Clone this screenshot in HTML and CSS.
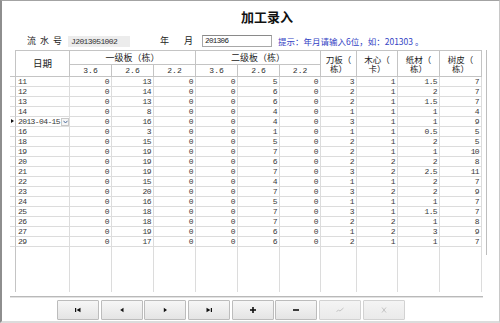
FILE: index.html
```html
<!DOCTYPE html>
<html>
<head>
<meta charset="utf-8">
<title>加工录入</title>
<link rel="stylesheet" href="styles.css">
</head>
<body>
<div class="window">
  <h1 class="title">加工录入</h1>
  <div class="info">
    <span class="spread lsh"><span>流</span><span>水</span><span>号</span></span>
    <span class="serial">J2013051002</span>
    <span class="spread ym"><span>年</span><span>月</span></span>
    <span class="input">201306</span>
    <span class="tip">提示：年月请输入6位，如：201303 。</span>
  </div>
  <div class="gridwrap">
    <table class="grid">
      <colgroup>
        <col class="c-rh"><col class="c-date">
        <col class="c42"><col class="c42"><col class="c42">
        <col class="c42"><col class="c42"><col class="c41">
        <col class="c36"><col class="c41"><col class="c42"><col class="c42">
      </colgroup>
      <thead>
        <tr class="h1">
          <th class="rh" rowspan="2"></th>
          <th class="date" rowspan="2">日期</th>
          <th colspan="3">一级板（栋）</th>
          <th colspan="3">二级板（栋）</th>
          <th class="two" rowspan="2">刀板（<br>栋）</th>
          <th class="two" rowspan="2">木心（<br>卡）</th>
          <th class="two" rowspan="2">纸材（<br>栋）</th>
          <th class="two" rowspan="2">树皮（<br>栋）</th>
        </tr>
        <tr class="h2">
          <th class="num">3.6</th><th class="num">2.6</th><th class="num">2.2</th>
          <th class="num">3.6</th><th class="num">2.6</th><th class="num">2.2</th>
        </tr>
      </thead>
      <tbody>
        <tr><td class="rh"></td><td class="d">11</td><td>0</td><td>13</td><td>0</td><td>0</td><td>5</td><td>0</td><td>3</td><td>1</td><td>1.5</td><td>7</td></tr>
        <tr><td class="rh"></td><td class="d">12</td><td>0</td><td>14</td><td>0</td><td>0</td><td>6</td><td>0</td><td>2</td><td>1</td><td>2</td><td>7</td></tr>
        <tr><td class="rh"></td><td class="d">13</td><td>0</td><td>13</td><td>0</td><td>0</td><td>6</td><td>0</td><td>2</td><td>1</td><td>1.5</td><td>7</td></tr>
        <tr><td class="rh"></td><td class="d">14</td><td>0</td><td>8</td><td>0</td><td>0</td><td>4</td><td>0</td><td>1</td><td>1</td><td>1</td><td>4</td></tr>
        <tr class="cur"><td class="rh"><span class="ind"></span></td><td class="d"><span class="dtext">2013-04-15</span><span class="dd"><svg width="5" height="4" viewBox="0 0 5 4"><polyline points="0.5,0.8 2.5,3 4.5,0.8" fill="none" stroke="#4a6a9a" stroke-width="1"/></svg></span></td><td>0</td><td>16</td><td>0</td><td>0</td><td>4</td><td>0</td><td>3</td><td>1</td><td>1</td><td>9</td></tr>
        <tr><td class="rh"></td><td class="d">16</td><td>0</td><td>3</td><td>0</td><td>0</td><td>1</td><td>0</td><td>1</td><td>1</td><td>0.5</td><td>5</td></tr>
        <tr><td class="rh"></td><td class="d">18</td><td>0</td><td>15</td><td>0</td><td>0</td><td>5</td><td>0</td><td>2</td><td>1</td><td>2</td><td>5</td></tr>
        <tr><td class="rh"></td><td class="d">19</td><td>0</td><td>19</td><td>0</td><td>0</td><td>7</td><td>0</td><td>2</td><td>1</td><td>1</td><td>10</td></tr>
        <tr><td class="rh"></td><td class="d">20</td><td>0</td><td>19</td><td>0</td><td>0</td><td>6</td><td>0</td><td>2</td><td>2</td><td>2</td><td>8</td></tr>
        <tr><td class="rh"></td><td class="d">21</td><td>0</td><td>19</td><td>0</td><td>0</td><td>7</td><td>0</td><td>3</td><td>2</td><td>2.5</td><td>11</td></tr>
        <tr><td class="rh"></td><td class="d">22</td><td>0</td><td>15</td><td>0</td><td>0</td><td>4</td><td>0</td><td>1</td><td>1</td><td>2</td><td>7</td></tr>
        <tr><td class="rh"></td><td class="d">23</td><td>0</td><td>20</td><td>0</td><td>0</td><td>7</td><td>0</td><td>3</td><td>2</td><td>2</td><td>9</td></tr>
        <tr><td class="rh"></td><td class="d">24</td><td>0</td><td>16</td><td>0</td><td>0</td><td>5</td><td>0</td><td>1</td><td>1</td><td>1</td><td>7</td></tr>
        <tr><td class="rh"></td><td class="d">25</td><td>0</td><td>18</td><td>0</td><td>0</td><td>7</td><td>0</td><td>3</td><td>1</td><td>1.5</td><td>7</td></tr>
        <tr><td class="rh"></td><td class="d">26</td><td>0</td><td>18</td><td>0</td><td>0</td><td>7</td><td>0</td><td>2</td><td>2</td><td>1</td><td>8</td></tr>
        <tr><td class="rh"></td><td class="d">27</td><td>0</td><td>19</td><td>0</td><td>0</td><td>6</td><td>0</td><td>1</td><td>2</td><td>3</td><td>9</td></tr>
        <tr><td class="rh"></td><td class="d">29</td><td>0</td><td>17</td><td>0</td><td>0</td><td>6</td><td>0</td><td>2</td><td>1</td><td>1</td><td>7</td></tr>
        <tr class="filler"><td class="rh"></td><td></td><td></td><td></td><td></td><td></td><td></td><td></td><td></td><td></td><td></td><td></td></tr>
      </tbody>
    </table>
    <div class="vline"></div>
  </div>
  <div class="gridbottom"></div>
  <div class="nav">
    <button class="btn"><svg width="10" height="10" viewBox="0 0 10 10"><rect x="2" y="3" width="1.2" height="4" fill="#111"/><polygon points="7.5,2.8 7.5,7.2 3.6,5" fill="#111"/></svg></button>
    <button class="btn"><svg width="10" height="10" viewBox="0 0 10 10"><polygon points="6.5,2.8 6.5,7.2 3.2,5" fill="#111"/></svg></button>
    <button class="btn"><svg width="10" height="10" viewBox="0 0 10 10"><polygon points="3.8,2.8 3.8,7.2 7,5" fill="#111"/></svg></button>
    <button class="btn"><svg width="10" height="10" viewBox="0 0 10 10"><polygon points="2.5,2.8 2.5,7.2 6.4,5" fill="#111"/><rect x="6.8" y="3" width="1.2" height="4" fill="#111"/></svg></button>
    <button class="btn"><svg width="10" height="10" viewBox="0 0 10 10"><rect x="2" y="4.2" width="6" height="1.6" fill="#111"/><rect x="4.2" y="2" width="1.6" height="6" fill="#111"/></svg></button>
    <button class="btn"><svg width="10" height="10" viewBox="0 0 10 10"><rect x="2" y="4.2" width="6" height="1.6" fill="#111"/></svg></button>
    <button class="btn off"><svg width="10" height="10" viewBox="0 0 10 10"><polyline points="1.5,6.5 3.5,5.2 5,6 8.5,3" fill="none" stroke="#c4c4c4" stroke-width="1"/></svg></button>
    <button class="btn off"><svg width="10" height="10" viewBox="0 0 10 10"><path d="M3 2.5 L7 7.5 M7 2.5 L3 7.5" fill="none" stroke="#c4c4c4" stroke-width="1"/></svg></button>
  </div>
</div>
</body>
</html>
```

FILE: styles.css
```css
* { box-sizing: border-box; }
html, body { margin: 0; padding: 0; background: #ffffff; }
body { font-family: "Noto Sans CJK SC", "Noto Sans", sans-serif; color: #222; }

.window {
  width: 500px;
  height: 323px;
  border-top: 1px solid #a3a3a3;
  border-left: 2px solid #8e8e8e;
  border-right: 1px solid #c8c8c8;
  border-bottom: 2px solid #dcdcdc;
  background: #ffffff;
  overflow: hidden;
}

.title {
  margin: 0 0 0 33px;
  padding-top: 8px;
  height: 25px;
  line-height: 16px;
  font-size: 13px;
  font-weight: bold;
  text-align: center;
  color: #111;
}

.info {
  display: flex;
  align-items: center;
  height: 12px;
  margin-top: 9px;
  padding-left: 25px;
  font-size: 9px;
  line-height: 12px;
}
.spread { display: flex; justify-content: space-between; }
.lsh { width: 35px; }
.ym { width: 33px; margin-left: 30px; }
.serial {
  margin-left: 6px;
  width: 62px;
  height: 11px;
  line-height: 11px;
  background: #ececec;
  padding-left: 3px;
  font-family: "Liberation Mono", monospace;
  font-size: 8px;
  letter-spacing: -0.6px;
  color: #333;
}
.input {
  margin-left: 9px;
  width: 70px;
  height: 12px;
  line-height: 10px;
  border: 1px solid #a8a8a8;
  border-top-color: #8a8a8a;
  padding-left: 2px;
  font-family: "Liberation Mono", monospace;
  font-size: 7.5px;
  letter-spacing: -0.6px;
  color: #222;
}
.tip {
  margin-left: 6px;
  color: #3343c4;
  font-size: 8.5px;
}

.gridwrap {
  display: flex;
  align-items: flex-start;
  margin-top: 3px;
  margin-left: 8px;
}
.vline {
  margin-left: 4px;
  width: 1px;
  height: 205px;
  background: #bdbdbd;
}

.grid {
  table-layout: fixed;
  width: 472px;
  border-collapse: separate;
  border-spacing: 0;
}
.c-rh { width: 6px; }
.c-date { width: 54px; }
.c42 { width: 42px; }
.c41 { width: 41px; }
.c36 { width: 36px; }

.grid th {
  padding: 0;
  font-weight: normal;
  font-size: 9px;
  color: #222;
  border-right: 1px solid #c4c4c4;
  border-bottom: 1px solid #c4c4c4;
  text-align: center;
  overflow: hidden;
  white-space: nowrap;
}
.grid .h1 th { border-top: 1px solid #c4c4c4; height: 15px; line-height: 13px; }
.grid .h1 th.rh { border-top: 0; }
.grid .h2 th { height: 12px; line-height: 11px; }
.grid th.num {
  font-family: "Liberation Mono", monospace;
  font-size: 8px;
  color: #333;
}
.grid th.date { font-size: 9.5px; }
.grid th.two { line-height: 9px; font-size: 8.5px; padding-top: 1px; }

.grid td {
  height: 10px;
  padding: 0 2px 0 0;
  line-height: 9px;
  font-family: "Liberation Mono", monospace;
  font-size: 8px;
  letter-spacing: -0.6px;
  color: #383838;
  text-align: right;
  border-right: 1px solid #dcdcdc;
  border-bottom: 1px solid #dcdcdc;
  white-space: nowrap;
  overflow: hidden;
}
.grid td.rh { padding: 0; border-right-color: #c4c4c4; position: relative; }
.grid td.d { text-align: left; padding-left: 2px; }
.grid .filler td { height: 45px; border-bottom: 0; }

.cur td.d { display: flex; align-items: center; justify-content: space-between; padding-right: 0; height: 10px; }
.dd {
  display: flex;
  align-items: center;
  justify-content: center;
  width: 8px;
  height: 8px;
  border: 1px solid #c9c9c9;
  background: #f6f6f6;
}
.ind {
  position: absolute;
  left: 1px;
  top: 2px;
  width: 0;
  height: 0;
  border-top: 2.5px solid transparent;
  border-bottom: 2.5px solid transparent;
  border-left: 3px solid #111;
}

.gridbottom {
  margin-top: 4px;
  margin-left: 8px;
  width: 473px;
  height: 2px;
  background: #b9b9b9;
  border-bottom: 1px solid #e2e2e2;
}

.nav {
  display: flex;
  gap: 1.7px;
  margin-top: 2px;
  margin-left: 55px;
}
.btn {
  width: 42px;
  height: 20px;
  padding: 0;
  margin: 0;
  display: flex;
  align-items: center;
  justify-content: center;
  background: linear-gradient(#f6f6f6, #e4e4e4);
  border: 1px solid #bcbcbc;
  border-radius: 1px;
}
.btn.off {
  background: linear-gradient(#f4f4f4, #eaeaea);
  border-color: #d2d2d2;
}
```
